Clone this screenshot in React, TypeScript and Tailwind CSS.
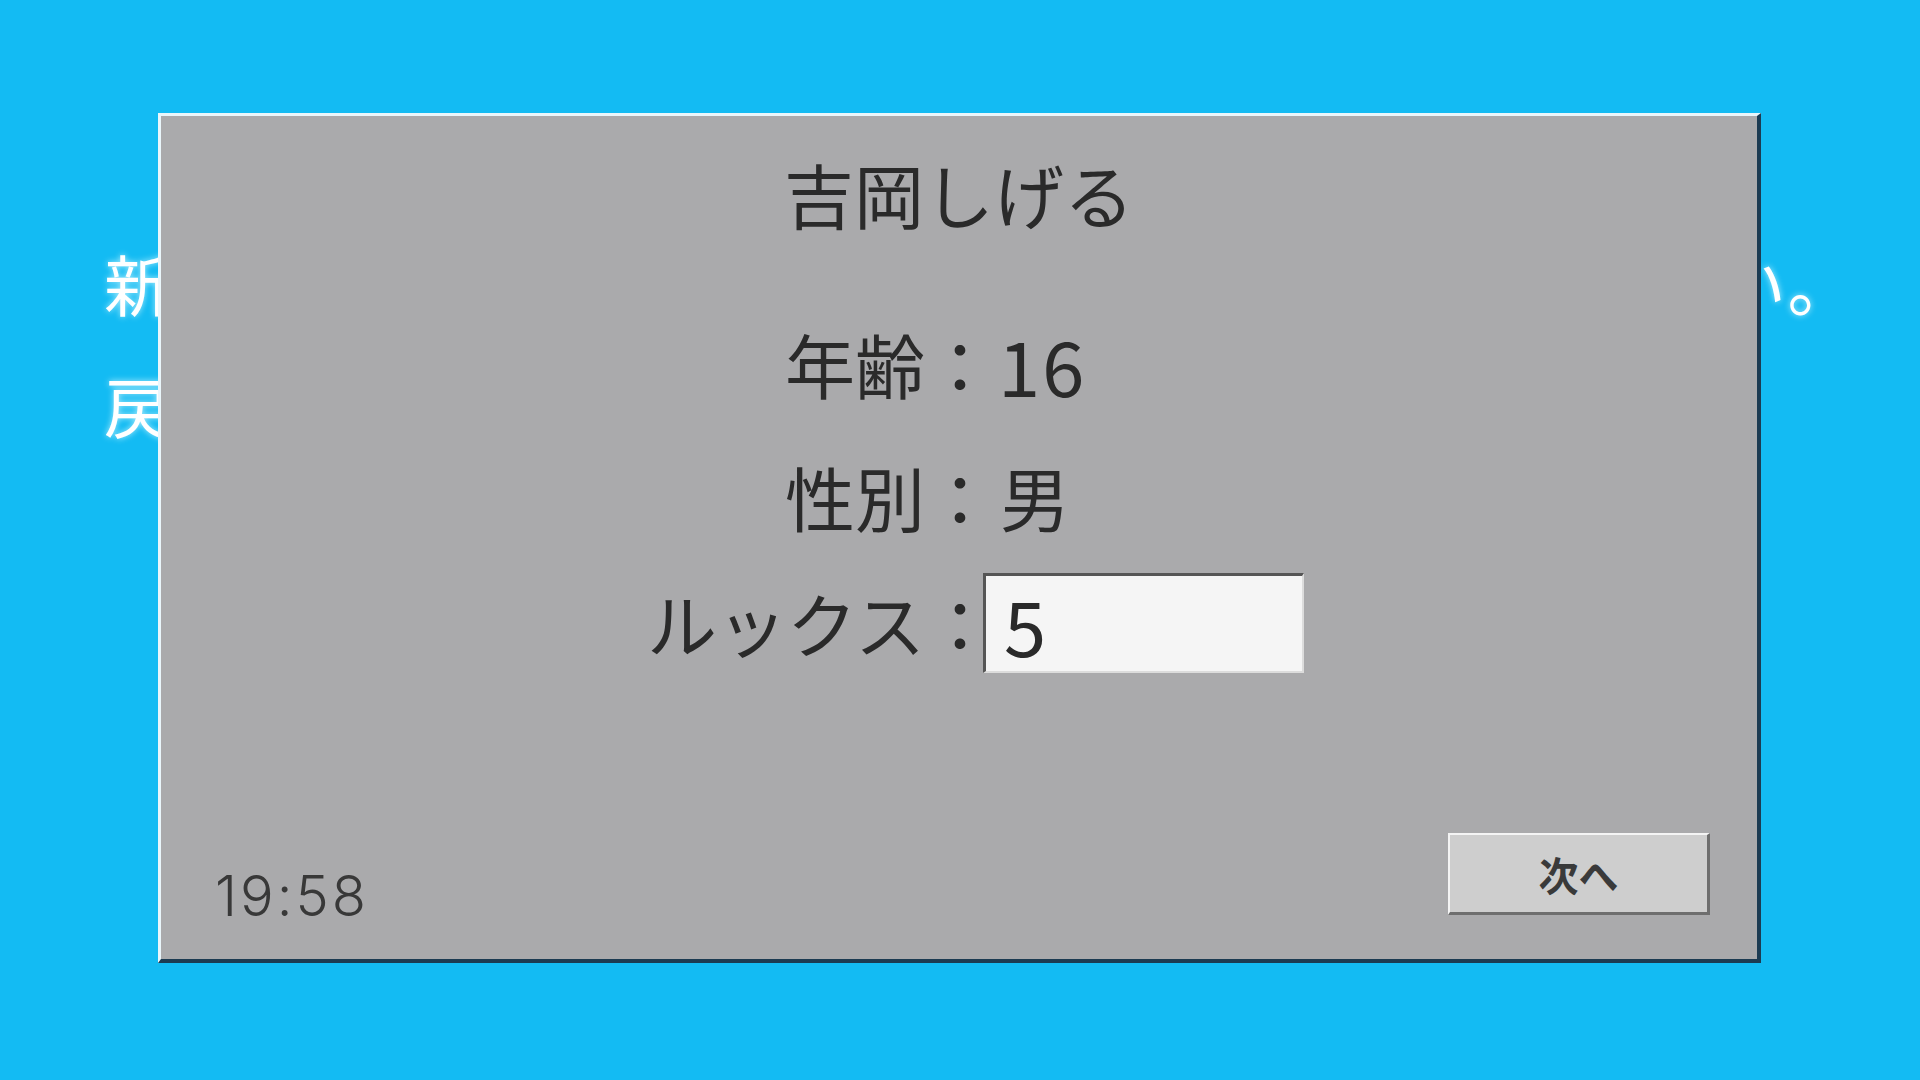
import React from 'react';

const jp = { fontFamily: '"Noto Sans CJK JP", sans-serif' };

function InfoRow({ label, children }: { label: string; children: React.ReactNode }) {
  return (
    <div className="grid grid-cols-[764px_70px_1fr] h-[100px] items-center text-[70px] leading-none text-[#2a2a2a]">
      <div className="text-right whitespace-nowrap">{label}</div>
      <div className="whitespace-nowrap">：</div>
      <div className="-ml-[12px] flex items-center">{children}</div>
    </div>
  );
}

export default function App() {
  return (
    <div className="relative w-[1920px] h-[1080px] overflow-hidden bg-[#13bbf3]" style={jp}>
      {/* text behind the dialog */}
      <div className="pt-[221px] pl-[104px] text-white text-[66px] leading-[122px] tracking-[1.6px] whitespace-nowrap [text-shadow:0_0_6px_rgba(200,245,255,0.9)]">
        <p>新しく追加するキャラクターの情報を入力してください。</p>
        <p>戻るには「戻る」ボタンを押してください。</p>
      </div>

      {/* dialog */}
      <div className="absolute left-[158px] top-[113px] w-[1603px] h-[850px] flex flex-col bg-[#aaaaac] border-t-[3px] border-l-[3px] border-r-4 border-b-4 border-t-[#eaf6fb] border-l-[#eaf6fb] border-r-[#1c3b52] border-b-[#1c3b52]">
        <div className="mt-[28px] h-[100px] flex items-center justify-center text-[70px] leading-none text-[#2a2a2a]">
          吉岡しげる
        </div>

        <div className="mt-[70px]">
          <InfoRow label="年齢">
            <span className="pl-[15px] text-[76px] tracking-[2px]">16</span>
          </InfoRow>
        </div>
        <div className="mt-[33px]">
          <InfoRow label="性別">
            <span className="pl-[17px]">男</span>
          </InfoRow>
        </div>
        <div className="mt-[26px]">
          <InfoRow label="ルックス">
            <div className="w-[321px] h-[100px] flex items-center pl-[18px] text-[76px] bg-[#f5f5f5] border-t-[3px] border-l-[3px] border-b-2 border-r-2 border-t-[#555555] border-l-[#555555] border-b-[#dcdcdc] border-r-[#dcdcdc]">
              5
            </div>
          </InfoRow>
        </div>

        <div className="mt-auto flex items-end justify-between pl-[54px] pr-[47px] pb-[35px]">
          <div className="text-[56px] leading-none font-[350] tracking-[3px] text-[#383838]" style={{ fontFamily: 'Inter, sans-serif' }}>
            19:58
          </div>
          <button className="mb-[9px] w-[262px] h-[82px] flex items-center justify-center bg-[#cecece] border-t-2 border-l-2 border-b-[3px] border-r-[3px] border-t-[#f4f4f4] border-l-[#f4f4f4] border-b-[#6e6e6e] border-r-[#6e6e6e] text-[40px] font-bold leading-none text-[#3a3a3a]">
            次へ
          </button>
        </div>
      </div>
    </div>
  );
}
